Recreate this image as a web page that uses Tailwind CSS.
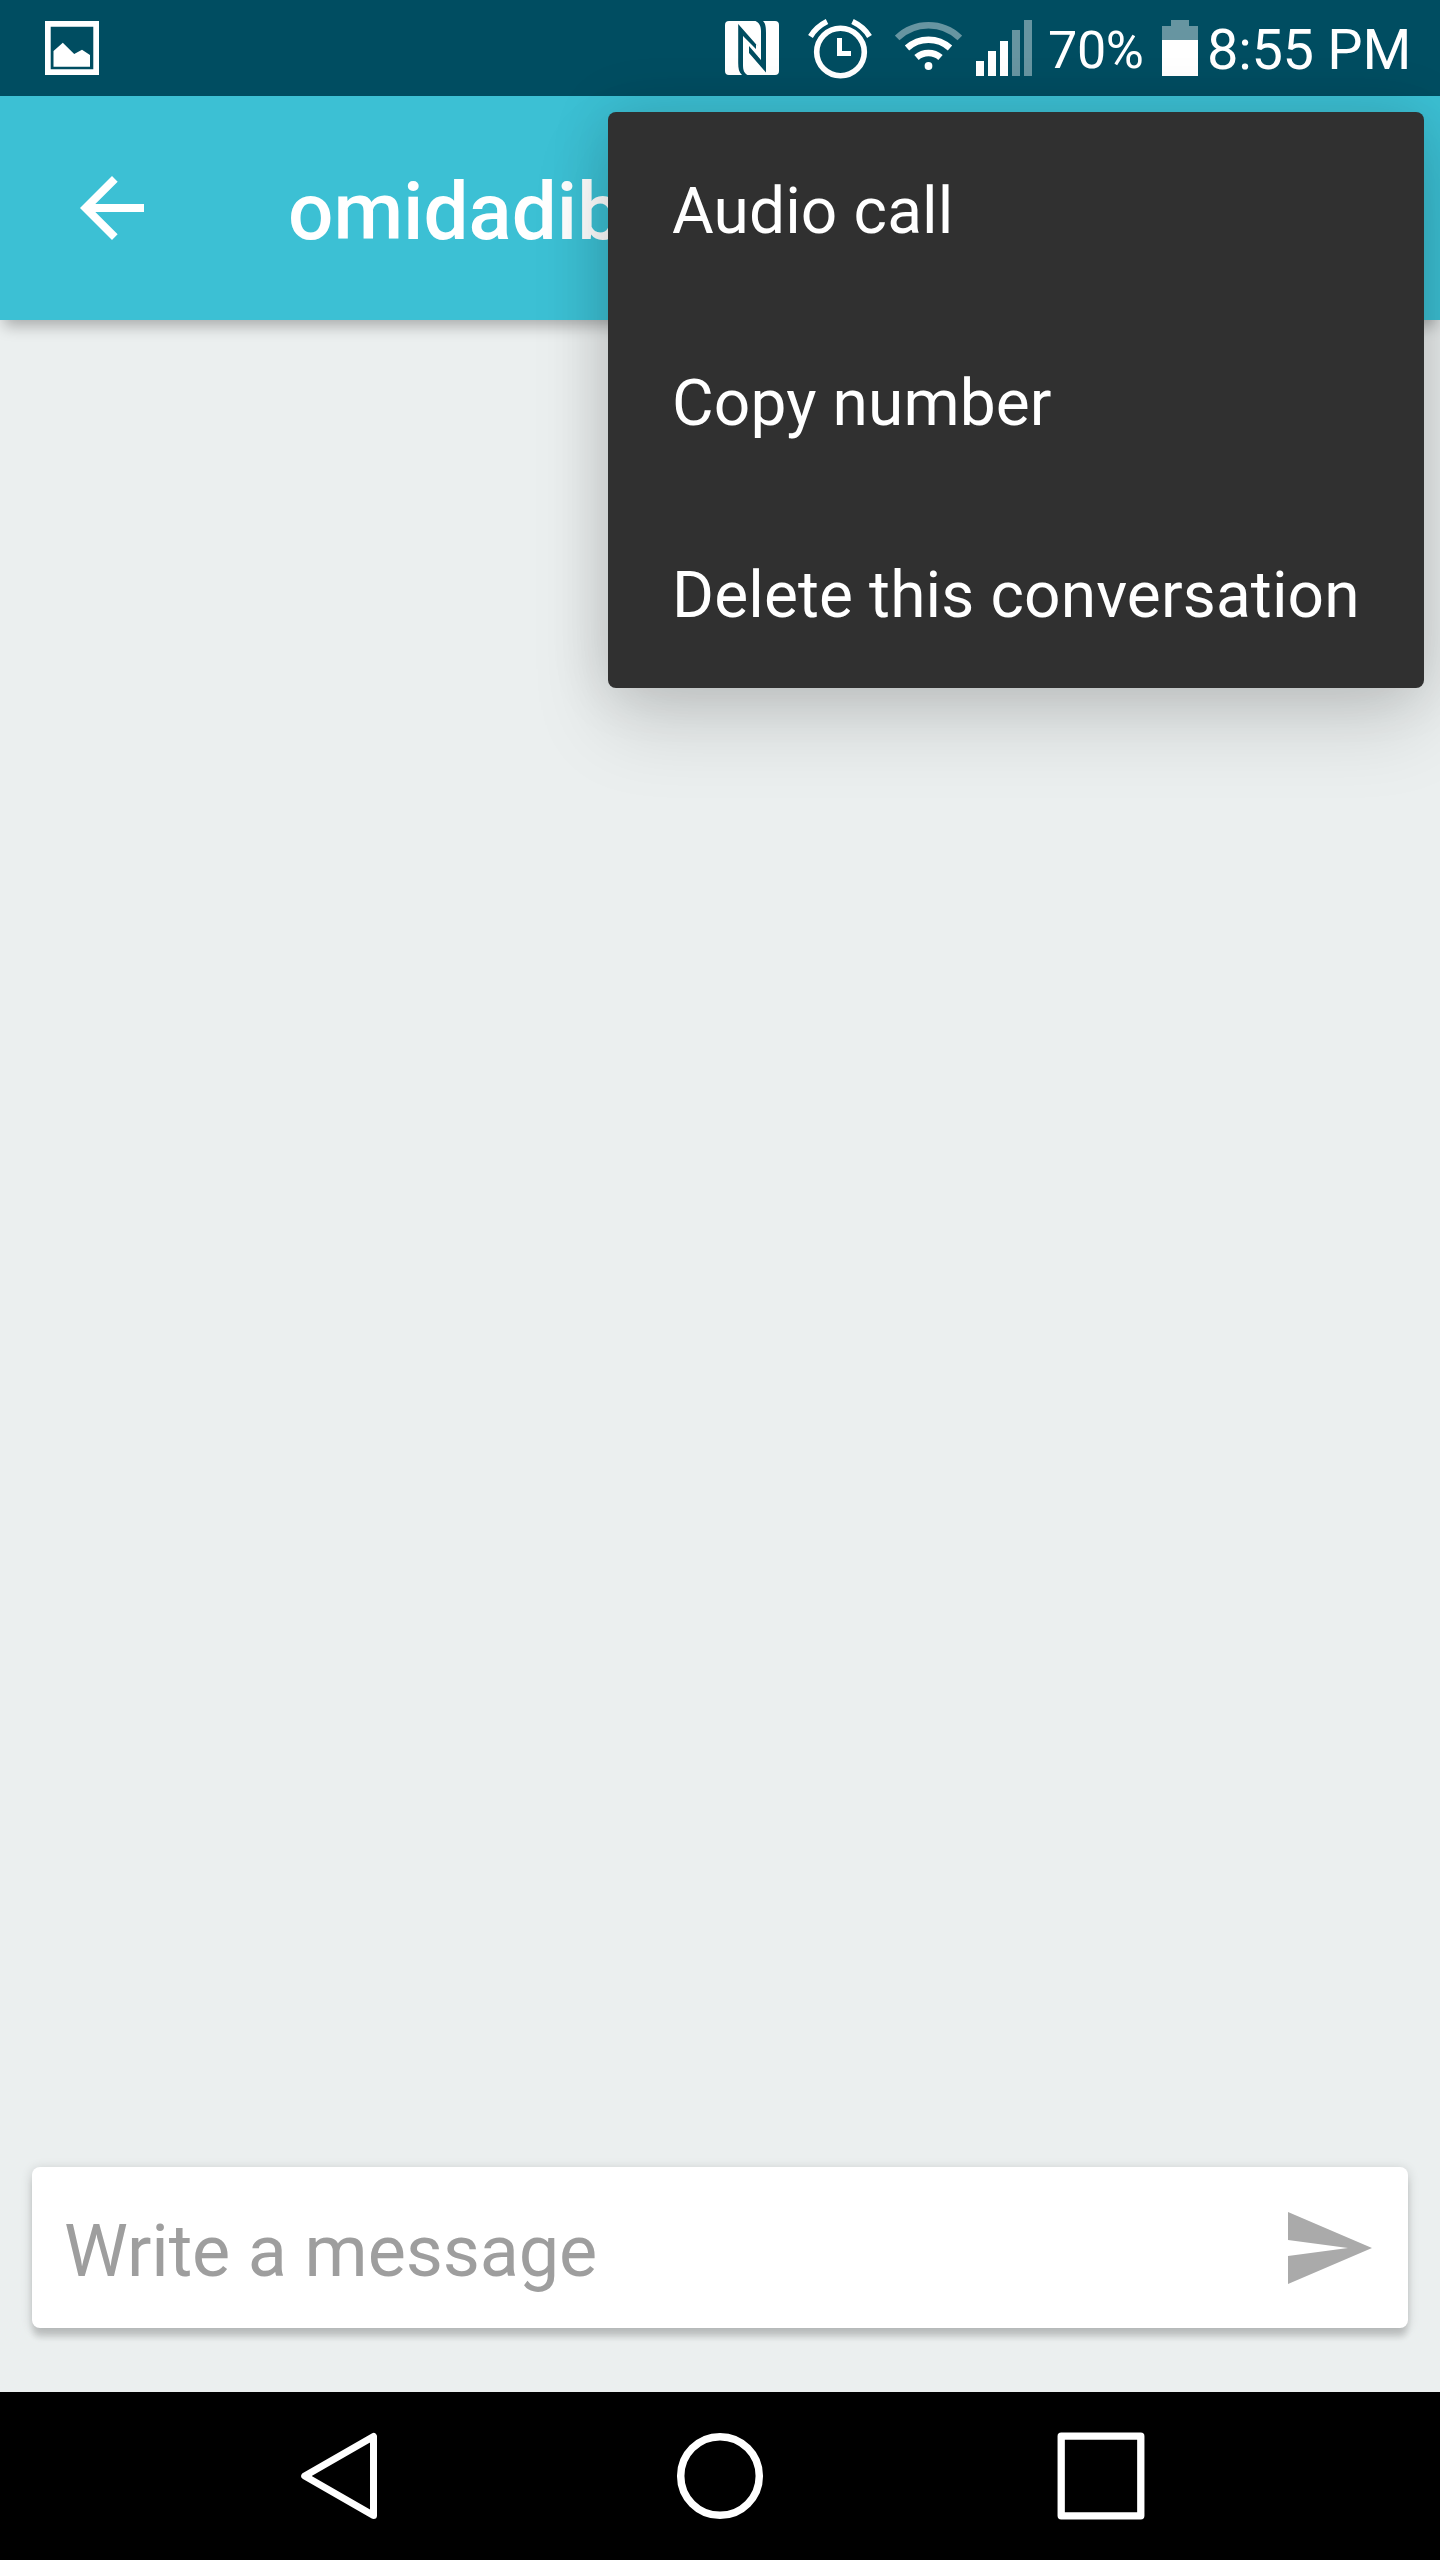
<!DOCTYPE html>
<html lang="en">
<head>
<meta charset="utf-8">
<title>Conversation</title>
<script src="https://cdn.jsdelivr.net/npm/@tailwindcss/browser@4"></script>
</head>
<body class="bg-[#ebefef]">
<div class="relative flex h-[2560px] w-[1440px] flex-col overflow-hidden bg-[#ebefef] font-[Roboto,sans-serif] text-white">

  <!-- Status bar -->
  <div class="z-10 flex h-24 shrink-0 items-start bg-[#004d61] pl-[45px] pt-[18px]">
    <svg class="mt-[3px] h-[54px] w-[54px] shrink-0" viewBox="0 0 54 54" fill="#fff">
      <path fill-rule="evenodd" d="M0 0H54V54H0ZM5.7 5.7V48.3H48.3V5.7Z"/>
      <path d="M8.5 30L17.8 21.8L29.2 33L37 28.8L45 34V45.7H8.5Z"/>
    </svg>
    <svg class="ml-[626px] mt-[3px] h-[54px] w-[54px] shrink-0" viewBox="0 0 54 54" fill="#fff">
      <path d="M4 0H30.5C34 1.500 36 5 36 10V38.500L33 35V25.500L13.200 3V42C13.200 47.500 14 51.500 17 54H4Q0 54 0 50V4Q0 0 4 0Z"/>
      <path d="M38 0H50Q54 0 54 4V50Q54 54 50 54H22.500C19 52 18 49 18 44V15.500L21 19V28.500L41 51.500V12C41 6 40.500 2.500 38 0Z"/>
      <path d="M18 15L31 28V23L36 28V39L24 25V33L18 26Z"/>
    </svg>
    <svg class="ml-[29px] h-[62px] w-[64px] shrink-0" viewBox="0 0 64 62" fill="none" stroke="#fff">
      <circle cx="32.500" cy="34" r="23.800" stroke-width="5.600"/>
      <path d="M2.500 18.500Q8 9 19 3.500M61.500 18.500Q56 9 44.500 3.500" stroke-width="5.500"/>
      <path d="M31.500 20V35.500H43" stroke-width="5"/>
    </svg>
    <svg class="ml-[23px] mt-1 h-12 w-[67px] shrink-0" viewBox="0 0 67 48" fill="none" stroke="#fff" stroke-width="6.500">
      <path d="M2.200 16A45 45 0 0 1 64.800 16" stroke="#6795a1"/>
      <path d="M12 26A32 32 0 0 1 55 26"/>
      <path d="M21.500 35.500A18 18 0 0 1 45.500 35.500"/>
      <circle cx="33.500" cy="44" r="3.900" fill="#fff" stroke="none"/>
    </svg>
    <svg class="ml-[14px] mt-[2px] h-14 w-14 shrink-0" viewBox="0 0 56 56" fill="#fff">
      <path d="M0 41H8V56H0ZM12 31H20V56H12ZM24 21H32V56H24Z"/>
      <path fill="#6795a1" d="M36 10H44V56H36ZM48 0H56V56H48Z"/>
    </svg>
    <span class="ml-4 mt-[2px] w-[114px] shrink-0 whitespace-nowrap text-[52px] leading-[61px] tracking-[-0.3px]">70%</span>
    <svg class="mt-[2px] h-14 w-9 shrink-0" viewBox="0 0 36 56">
      <path fill="#6795a1" d="M9 0H27V6H36V20H0V6H9Z"/>
      <path fill="#fff" d="M0 20H36V56H0Z"/>
    </svg>
    <span class="ml-[9px] shrink-0 whitespace-nowrap text-[56px] leading-[65px] tracking-[-0.3px]">8:55 PM</span>
  </div>

  <!-- App bar -->
  <div class="flex h-56 shrink-0 items-center bg-[#3cc0d4] pl-20 shadow-[0_10px_14px_-4px_rgba(0,0,0,0.28)]">
    <svg class="h-16 w-16 shrink-0" viewBox="4 4 16 16" fill="#fff">
      <path d="M20 11H7.830l5.590-5.590L12 4l-8 8 8 8 1.410-1.410L7.830 13H20v-2z"/>
    </svg>
    <h1 class="ml-36 mt-2 whitespace-nowrap text-[80px] font-medium leading-[94px]">omidadib</h1>
  </div>

  <!-- Empty conversation -->
  <main class="flex-1"></main>

  <!-- Message composer -->
  <div class="mx-8 mb-16 flex h-[161px] shrink-0 items-center justify-between rounded-lg bg-white pl-8 pr-9 shadow-[0_10px_6px_-1px_rgba(0,0,0,0.14),0_2px_12px_rgba(0,0,0,0.16)]">
    <span class="mt-[9px] whitespace-nowrap text-[72px] leading-[84px] tracking-[-0.13px] text-[#9e9e9e]">Write a message</span>
    <svg class="h-[72px] w-[84px] shrink-0" viewBox="0 0 84 72" fill="#aaa">
      <path d="M0 0L84 36L0 72V44L60 36L0 28Z"/>
    </svg>
  </div>

  <!-- Navigation bar -->
  <nav class="flex h-[168px] shrink-0 items-center bg-black pl-[301px]">
    <svg class="h-[88px] w-[76px] shrink-0" viewBox="0 0 76 88" fill="none" stroke="#fff" stroke-width="7" stroke-linejoin="round">
      <path d="M72.500 4.500V83.500L3.700 44Z"/>
    </svg>
    <svg class="ml-[299px] h-[88px] w-[88px] shrink-0" viewBox="0 0 88 88" fill="none" stroke="#fff" stroke-width="7.500">
      <circle cx="44" cy="44" r="39.300"/>
    </svg>
    <svg class="ml-[293px] h-[88px] w-[88px] shrink-0" viewBox="0 0 88 88" fill="none" stroke="#fff" stroke-width="7.300" stroke-linejoin="round">
      <rect x="4.200" y="4.200" width="79.600" height="79.600"/>
    </svg>
  </nav>

  <!-- Overflow menu -->
  <div class="absolute left-[608px] top-28 z-20 flex h-[576px] w-[816px] flex-col rounded-lg bg-[#303030] text-[64px] leading-[76px] tracking-[0.13px] shadow-[0_38px_80px_rgba(0,0,0,0.13),0_0_60px_rgba(0,0,0,0.14)]">
    <div class="flex h-48 items-center px-16 pt-2"><span class="whitespace-nowrap">Audio call</span></div>
    <div class="flex h-48 items-center px-16 pt-2"><span class="whitespace-nowrap">Copy number</span></div>
    <div class="flex h-48 items-center px-16 pt-2"><span class="whitespace-nowrap">Delete this conversation</span></div>
  </div>
</div>
</body>
</html>
